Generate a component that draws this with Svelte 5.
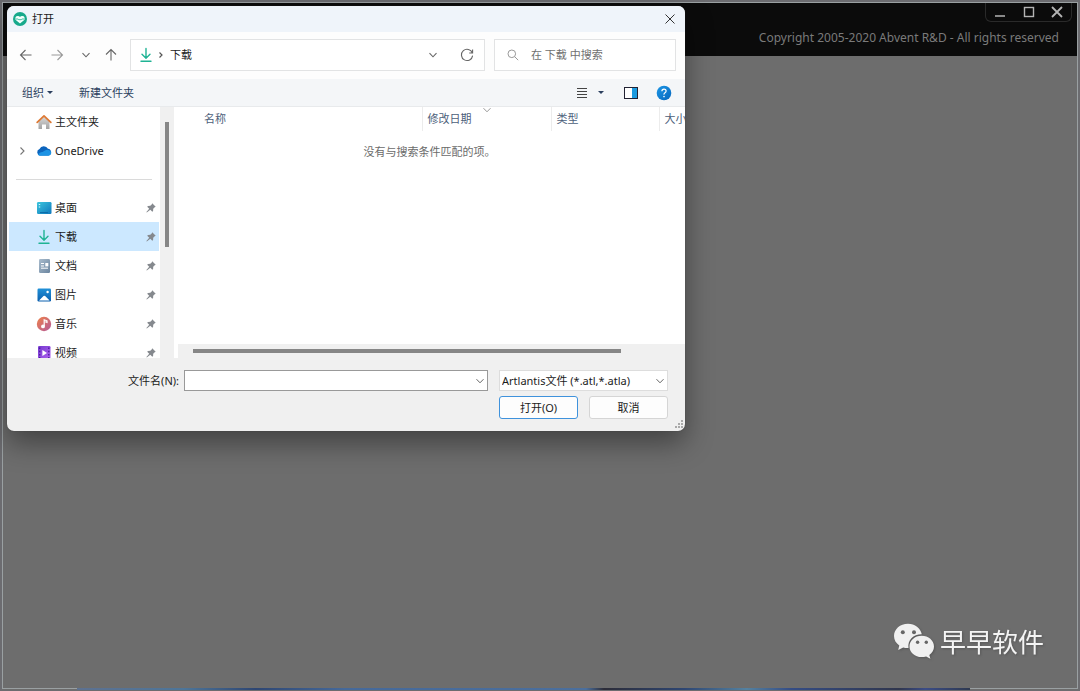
<script>
  const places = [
    { name: '桌面', icon: 'desktop' },
    { name: '下载', icon: 'download' },
    { name: '文档', icon: 'document' },
    { name: '图片', icon: 'picture' },
    { name: '音乐', icon: 'music' },
    { name: '视频', icon: 'video' }
  ];
  let selected = $state('下载');
  let fileName = $state('');
  let query = $state('');
</script>

{#snippet downloadIcon()}
  <svg width="16" height="16" viewBox="0 0 16 16" fill="none" stroke="#1fb394" stroke-width="1.4" stroke-linecap="round" stroke-linejoin="round">
    <path d="M8 1.5v9.5M4 7.3l4 4 4-4M3 14.3h10" />
  </svg>
{/snippet}

{#snippet chevron()}
  <svg class="chev" width="10" height="10" viewBox="0 0 10 10" fill="none" stroke="currentColor"><path d="M1.500 3.200L5 6.800l3.500-3.600" /></svg>
{/snippet}

{#snippet placeIcon(kind)}
  {#if kind === 'download'}
    {@render downloadIcon()}
  {:else}
    <svg width="16" height="16" viewBox="0 0 16 16">
      {#if kind === 'desktop'}
        <rect x="1" y="2" width="14.5" height="12" rx="1.2" fill="url(#desk)" />
        <path d="M2.800 4.500h1.400M2.800 7h1.400" stroke="#d5f4ff" stroke-width="1.200" />
        <path d="M4 12.600h8" stroke="#0b69a8" stroke-width="1" />
      {:else if kind === 'document'}
        <rect x="3" y="1" width="11" height="14" rx="1.2" fill="url(#doc)" />
        <path d="M5 5.500h3M5 8h3M5 10.200h7" stroke="#fff" stroke-width="1" />
        <rect x="9.3" y="5" width="3" height="3.4" fill="#fff" />
      {:else if kind === 'picture'}
        <rect x="1.5" y="1.5" width="13.5" height="13" rx="1.2" fill="url(#pic)" />
        <path d="M3 13.500l4.500-4.400q.8-.8 1.600 0l4.500 4.400z" fill="#fff" />
        <circle cx="11.6" cy="5" r="1.2" fill="#fff" />
      {:else if kind === 'music'}
        <circle cx="8" cy="8" r="7.2" fill="url(#mus)" />
        <path d="M8.200 10.300V3.800l2.800 1v1.500l-1.800-.6" fill="none" stroke="#fff" stroke-width="1.200" />
        <circle cx="7" cy="10.4" r="1.9" fill="#fff" />
      {:else}
        <rect x="2" y="1" width="12.5" height="14" rx="1.2" fill="url(#vid)" />
        <path d="M3.700 2.500v11M12.800 2.500v11" stroke="#4a1a9c" stroke-width="1.300" stroke-dasharray="1.5 1.7" />
        <path d="M6.400 5v6l4.600-3z" fill="#fff" />
      {/if}
    </svg>
  {/if}
{/snippet}

<svg class="defs" width="0" height="0" aria-hidden="true">
  <defs>
    <linearGradient id="desk" x2="1" y2="1"><stop stop-color="#3cc6dd" /><stop offset="1" stop-color="#0f78bd" /></linearGradient>
    <linearGradient id="doc" x2="1" y2="1"><stop stop-color="#a9bccd" /><stop offset="1" stop-color="#6b859f" /></linearGradient>
    <linearGradient id="pic" x2="0" y2="1"><stop stop-color="#2191d8" /><stop offset="1" stop-color="#0b5fae" /></linearGradient>
    <linearGradient id="mus" x2="1" y2="1"><stop stop-color="#ee8149" /><stop offset="1" stop-color="#b45a9b" /></linearGradient>
    <linearGradient id="vid" x2="1" y2="1"><stop stop-color="#7438cf" /><stop offset="1" stop-color="#b265f0" /></linearGradient>
    <linearGradient id="help" x2="1" y2="1"><stop stop-color="#1b96e6" /><stop offset="1" stop-color="#0667bd" /></linearGradient>
    <linearGradient id="wall" x2="0" y2="1"><stop stop-color="#d8d8d8" /><stop offset="1" stop-color="#a3a3a3" /></linearGradient>
  </defs>
</svg>

<main class="app">
  <header class="appbar">
    <div class="winctl">
      <button aria-label="最小化"><svg width="12" height="12" viewBox="0 0 12 12"><path d="M1 10h10" stroke="currentColor" stroke-width="1.500" /></svg></button>
      <button aria-label="最大化"><svg width="12" height="12" viewBox="0 0 12 12"><rect x="1.5" y="1.5" width="9" height="9" fill="none" stroke="currentColor" stroke-width="1.4" /></svg></button>
      <button aria-label="关闭程序"><svg width="12" height="12" viewBox="0 0 12 12"><path d="M1 1l10 10M11 1L1 11" stroke="currentColor" stroke-width="1.800" /></svg></button>
    </div>
    <p>Copyright 2005-2020 Abvent R&amp;D - All rights reserved</p>
  </header>

  <div class="watermark">
    <svg width="42" height="36" viewBox="0 0 42 36">
      <path d="M15 0.8C7 0.8 1 6.300 1 13c0 4 2 7.200 5.300 9.500L5.200 27l5-2.600c1.700.5 3.500.7 5.300.6C14.500 17 20 11.500 28.800 11.300 27.500 5 22 .8 15 .8z" fill="#f0f0f0" />
      <path d="M41 23.500c0-6-5.600-10.700-12.400-10.700S16.500 17.600 16.500 23.500s5.400 10.600 12.100 10.600c1.600 0 3.100-.2 4.500-.7l4.300 2.300-1.100-3.700c2.900-2 4.700-5 4.700-8.500z" fill="#f0f0f0" />
      <g fill="#666"><circle cx="9.800" cy="9.300" r="2" /><circle cx="21" cy="9.300" r="2" /><circle cx="24.600" cy="19.300" r="1.700" /><circle cx="33.300" cy="19.300" r="1.700" /></g>
    </svg>
    <span>早早软件</span>
  </div>
  <div class="strip"></div>
</main>

<div class="dialog" role="dialog" aria-label="打开">
  <div class="title">
    <svg width="14" height="14" viewBox="0 0 14 14">
      <circle cx="7" cy="7" r="7" fill="#17a98b" />
      <path d="M7 11.500L2.500 7.800V5.200Q3.200 3.800 5 3.900 6.300 4 7 5 7.700 4 9 3.900q1.800-.1 2.500 1.300v2.600z" fill="#f2fffb" />
      <path d="M3 7h2l.8.700h2.400L9 7h2" fill="none" stroke="#17a98b" stroke-width=".8" />
    </svg>
    <h1>打开</h1>
    <button class="plain" aria-label="关闭"><svg width="12" height="12" viewBox="0 0 12 12"><path d="M1.500 1.500l9 9M10.500 1.500l-9 9" stroke="#333" stroke-width="1" /></svg></button>
  </div>

  <div class="nav">
    <div class="arrows">
      <button class="plain" aria-label="后退"><svg width="14" height="14" viewBox="0 0 14 14"><path d="M12.500 7h-11M6.500 2L1.500 7l5 5" /></svg></button>
      <button class="plain dim" aria-label="前进"><svg width="14" height="14" viewBox="0 0 14 14"><path d="M1.500 7h11M7.500 2l5 5-5 5" /></svg></button>
      <button class="plain small" aria-label="最近位置">{@render chevron()}</button>
      <button class="plain" aria-label="上移"><svg width="14" height="14" viewBox="0 0 14 14"><path d="M7 12.500v-11M2 6.500l5-5 5 5" /></svg></button>
    </div>
    <div class="address">
      {@render downloadIcon()}
      <svg width="10" height="10" viewBox="0 0 10 10" fill="none" stroke="#555" stroke-width="1.200"><path d="M3.500 2.500L6 5 3.500 7.500" /></svg>
      <button class="plain crumb">下载</button>
      <button class="plain mid" aria-label="展开">{@render chevron()}</button>
      <button class="plain" aria-label="刷新"><svg width="14" height="14" viewBox="0 0 14 14"><path d="M12.300 5A5.600 5.600 0 1 0 12.600 7.600M12.600 1.600V5H9.200" /></svg></button>
    </div>
    <label class="search">
      <svg width="12" height="12" viewBox="0 0 12 12" fill="none" stroke="#999"><circle cx="4.800" cy="4.800" r="3.800" /><path d="M7.600 7.600l3.600 3.600" /></svg>
      <input type="text" aria-label="搜索" placeholder="在 下载 中搜索" bind:value={query} />
    </label>
  </div>

  <div class="tools">
    <button class="plain">组织 <i class="tri"></i></button>
    <button class="plain">新建文件夹</button>
    <span class="grow"></span>
    <button class="plain view" aria-label="更改视图">
      <svg width="12" height="12" viewBox="0 0 12 12" stroke="#444"><path d="M1 1.500h10M1 4.500h10M1 7.500h10M1 10.500h10" /></svg>
      <i class="tri"></i>
    </button>
    <button class="plain" aria-label="预览窗格"><svg width="14" height="12" viewBox="0 0 14 12"><rect x=".5" y=".5" width="13" height="11" fill="#fff" stroke="#223" /><rect x="8" y="1" width="5" height="10" fill="#1c9be0" /></svg></button>
    <button class="plain help" aria-label="帮助"><svg width="16" height="16" viewBox="0 0 16 16"><circle cx="8" cy="8" r="7.300" fill="url(#help)" /><path d="M5.900 6.200q0-2.100 2.100-2.100t2.100 1.900q0 1.100-1.100 1.800T8 9.600" fill="none" stroke="#fff" stroke-width="1.200" /><circle cx="8" cy="11.600" r=".8" fill="#fff" /></svg></button>
  </div>

  <div class="body">
    <nav class="side">
      <button class="row">
        <span class="exp"></span>
        <svg width="16" height="16" viewBox="0 0 16 16"><path d="M2.500 7.500L8 2.500l5.500 5V15H10v-4.500H6V15H2.500z" fill="url(#wall)" /><path d="M1.200 8.300L8 1.900l6.800 6.400" fill="none" stroke="#de7a35" stroke-width="1.800" stroke-linecap="round" stroke-linejoin="round" /></svg>
        主文件夹
      </button>
      <button class="row">
        <span class="exp"><svg width="10" height="10" viewBox="0 0 10 10" fill="none" stroke="#777" stroke-width="1.100"><path d="M3.500 1.500L7 5 3.500 8.500" /></svg></span>
        <svg width="16" height="16" viewBox="0 0 16 16"><path d="M4 12.500a3.300 3.300 0 0 1-.5-6.400A4.700 4.700 0 0 1 12 5.800a3.400 3.400 0 0 1 .4 6.700z" fill="#0b64bd" /><path d="M2 11.500q1.600-2.800 4.500-2.500L9 7.500q3-1.800 6.200 1.200.5 3.500-2.700 4H3.600q-1-.2-1.600-1.200z" fill="#1d93e4" /></svg>
        OneDrive
      </button>
      <hr />
      {#each places as place}
        <button class="row" class:on={selected === place.name} onclick={() => (selected = place.name)}>
          <span class="exp"></span>
          {@render placeIcon(place.icon)}
          {place.name}
          <svg class="pin" width="10" height="10" viewBox="0 0 10 10"><path d="M6.200.3l3.500 3.500-1 .5-1.500 1.500-.1 2.300-.8.700-2-2L.8 9.500l-.4-.4 2.800-3.400-2-2 .8-.8 2.300-.1L5.700 1.400z" fill="#85898e" /></svg>
        </button>
      {/each}
    </nav>
    <div class="vbar"><i></i></div>
    <section class="files">
      <div class="list">
        <table>
          <thead>
            <tr>
              <th class="c1">名称</th>
              <th class="c2">修改日期<span class="sort">{@render chevron()}</span></th>
              <th class="c3">类型</th>
              <th class="c4">大小</th>
            </tr>
          </thead>
        </table>
        <p>没有与搜索条件匹配的项。</p>
      </div>
      <div class="hbar"><i></i></div>
    </section>
  </div>

  <form class="foot" onsubmit={(e) => e.preventDefault()}>
    <label for="fname">文件名(N):</label>
    <div class="combo name">
      <input id="fname" type="text" bind:value={fileName} />
      {@render chevron()}
    </div>
    <div class="combo type">
      <select aria-label="文件类型"><option>Artlantis文件 (*.atl,*.atla)</option></select>
      {@render chevron()}
    </div>
    <div class="actions">
      <button class="primary" type="submit">打开(O)</button>
      <button type="button">取消</button>
    </div>
  </form>
  <svg class="grip" width="10" height="10" viewBox="0 0 10 10" fill="#aaa"><path d="M7 0h2v2H7zM4 3h2v2H4zM7 3h2v2H7zM1 6h2v2H1zM4 6h2v2H4zM7 6h2v2H7z" /></svg>
</div>

<style>
  :global(body) { background: #6e6e6e; }
  :global(#app) { font: 11px/16px "Noto Sans", "Noto Sans CJK SC", sans-serif; color: #1b1b1b; }
  * { box-sizing: border-box; }
  button, input, select { font: inherit; color: inherit; }
  h1, p { margin: 0; font-size: inherit; font-weight: 400; }
  svg { flex: none; display: block; }
  .defs { position: absolute; }

  .app { min-height: 100vh; display: flex; flex-direction: column; background: #6d6d6d; border: 2px solid #6c6c70; border-bottom-width: 1px; outline: 1px solid #9aa0a2; outline-offset: -3px; }
  .appbar { height: 54px; margin: 0 1px; background: #0b0b0b; color: #7a7a7a; display: flex; flex-direction: column; align-items: flex-end; border-top: 1px solid #9aa0a2; }
  .appbar p { font-size: 12px; line-height: 18px; margin: 7px 18px 0 0; }
  .winctl { display: flex; margin-right: 5px; height: 19px; width: 87px; border: 1px solid #2a2a2a; border-top: 0; border-radius: 0 0 6px 6px; justify-content: space-between; padding: 0 8px; }
  .winctl button { border: 0; background: none; padding: 0; color: #b4b4b4; display: flex; align-items: center; }
  .watermark { margin: auto 34px 27px auto; display: flex; align-items: center; gap: 5px; color: #f4f4f4; font: 26px/40px "Noto Sans CJK SC", sans-serif; filter: drop-shadow(1px 1px 1px #4448); }
  .strip { height: 2px; margin: 0 10% 0 7%; background: linear-gradient(90deg, #5d7190, #4d7599 12%, #2e4672 20%, #45699a 30%, #4b6f9d 57%, #2c2c38 59%, #2e4672 68%, #5481a0 75%, #344c84 80%, #30364d 92%, #3b4c86 95%, #2e3950); position: relative; z-index: 1; }

  .dialog { position: absolute; left: 7px; top: 6px; width: 678px; max-width: calc(100% - 14px); background: #f0f0f0; border-radius: 7px; overflow: hidden; box-shadow: 0 0 1px #333, 0 12px 28px #0006; }
  .plain { border: 0; background: none; padding: 0; display: flex; align-items: center; justify-content: center; }
  .tri { border: 3px solid transparent; border-top-color: currentColor; border-bottom: 0; }
  .chev { color: #666; }

  .title { height: 26px; padding: 0 9px 0 6px; display: flex; align-items: center; gap: 5px; background: #eff4fa; }
  .title h1 { flex: 1; }
  .nav { height: 47px; padding: 0 9px 2px 12px; display: flex; align-items: center; background: #fdfdfd; }
  .arrows { display: flex; align-items: center; gap: 17px; margin-right: 12px; }
  .nav .plain svg { fill: none; stroke: #666; stroke-width: 1.1; }
  .arrows .dim svg { stroke: #999; }
  .arrows .small { width: 10px; }
  .arrows .small + .plain { margin-left: -4px; }
  .address { flex: 1; height: 32px; display: flex; align-items: center; border: 1px solid #e2e3e4; background: #fff; padding: 0 10px 0 7px; }
  .address > svg + svg { margin: 0 4px 0 2px; }
  .mid { margin: 0 22px 0 auto; }
  .search { width: 182px; height: 32px; margin-left: 9px; padding: 0 12px; border: 1px solid #e2e3e4; background: #fff; display: flex; align-items: center; gap: 12px; }
  .search input { border: 0; padding: 0; flex: 1; min-width: 0; outline: 0; background: none; }
  .search input::placeholder { color: #707070; opacity: 1; }

  .tools { height: 28px; padding: 0 13px 0 15px; display: flex; align-items: center; gap: 26px; background: #f4f6f8; border-bottom: 1px solid #e8eaec; color: #2b3f5e; }
  .tools .plain { gap: 3px; }
  .tools .view { gap: 10px; margin-right: -6px; }
  .tools .help { margin-left: -8px; }
  .grow { flex: 1; }

  .body { height: 251px; display: flex; background: #fff; }
  .side { width: 153px; overflow: hidden; padding: 0 1px 0 2px; }
  .row { width: 100%; height: 29px; border: 0; background: none; padding: 0 3px 0 8px; display: flex; align-items: center; gap: 3px; }
  .row.on { background: #cce8ff; }
  .exp { width: 16px; }
  .pin { margin-left: auto; }
  .side hr { height: 1px; border: 0; background: #dadada; margin: 14px 7px 13px; }
  .vbar { width: 14px; background: #f0f0f0; padding: 15px 5px; }
  .vbar i { display: block; background: #868686; height: 125px; }
  .files { flex: 1; min-width: 0; display: flex; flex-direction: column; }
  .list { flex: 1; overflow: hidden; }
  table { table-layout: fixed; width: 600px; border-collapse: collapse; color: #4c607a; }
  th { height: 24px; font-weight: 400; text-align: left; padding: 0 0 0 5px; border-right: 1px solid #ececec; position: relative; }
  .c1 { width: 248px; padding-left: 30px; }
  .c2 { width: 129px; }
  .c3 { width: 108px; }
  .sort { position: absolute; top: -2px; left: 59px; }
  .sort .chev, .sort :global(svg) { color: #999; }
  .list p { text-align: center; color: #6b6b6b; padding: 13px 0 0; }
  .hbar { height: 14px; margin-left: 4px; background: #f0f0f0; padding: 5px 64px 5px 15px; }
  .hbar i { display: block; height: 4px; background: #868686; }

  .foot { padding: 12px 17px 12px 0; display: grid; grid-template-columns: 172px 1fr 169px; row-gap: 5px; align-items: center; }
  .foot > label { text-align: right; }
  .combo { position: relative; display: flex; align-items: center; height: 21px; background: #fff; border: 1px solid #999; }
  .combo input, .combo select { flex: 1; min-width: 0; height: 100%; border: 0; padding: 0 18px 0 2px; background: none; appearance: none; outline: 0; }
  .combo :global(.chev) { position: absolute; right: 2px; pointer-events: none; }
  .name { margin: 0 11px 0 5px; }
  .type { border-color: #ddd; }
  .actions { grid-column: 3; display: grid; grid-template-columns: 1fr 1fr; gap: 11px; }
  .actions button { height: 23px; padding: 0; background: #fdfdfd; border: 1px solid #d5d5d5; border-radius: 3px; }
  .actions .primary { border-color: #3f92dc; }
  .grip { position: absolute; right: 1px; bottom: 1px; }
</style>
